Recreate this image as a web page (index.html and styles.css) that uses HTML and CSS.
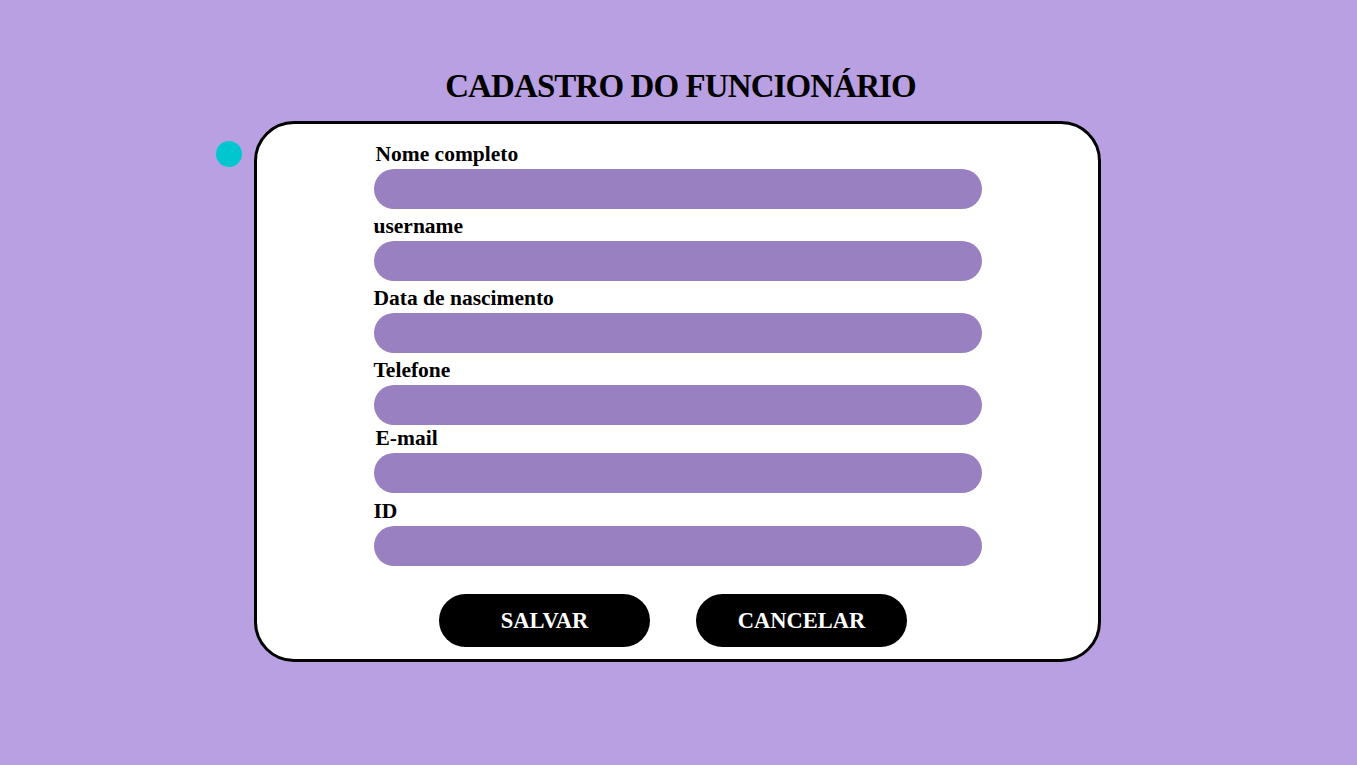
FILE: index.html
```html
<!DOCTYPE html>
<html lang="pt-BR">
<head>
<meta charset="utf-8">
<title>Cadastro do Funcionário</title>
<link rel="stylesheet" href="styles.css">
</head>
<body>
  <main class="page">
    <h1 class="title">CADASTRO DO FUNCIONÁRIO</h1>
    <form class="card">
      <span class="dot"></span>
      <div class="fields">
        <div class="field">
          <label class="label label-shift" for="nome">Nome completo</label>
          <input class="input" id="nome" type="text">
        </div>
        <div class="field">
          <label class="label" for="username">username</label>
          <input class="input" id="username" type="text">
        </div>
        <div class="field">
          <label class="label" for="nasc">Data de nascimento</label>
          <input class="input" id="nasc" type="text">
        </div>
        <div class="field">
          <label class="label" for="tel">Telefone</label>
          <input class="input" id="tel" type="text">
        </div>
        <div class="field field-tight">
          <label class="label label-shift" for="email">E-mail</label>
          <input class="input" id="email" type="text">
        </div>
        <div class="field field-loose">
          <label class="label" for="id">ID</label>
          <input class="input" id="id" type="text">
        </div>
      </div>
      <div class="actions">
        <button class="btn" type="button">SALVAR</button>
        <button class="btn" type="button">CANCELAR</button>
      </div>
    </form>
  </main>
</body>
</html>
```

FILE: styles.css
```css
* {
  box-sizing: border-box;
}

html, body {
  margin: 0;
  padding: 0;
}

body {
  background: #b9a0e2;
  font-family: "Liberation Serif", "Times New Roman", serif;
  color: #000;
  min-height: 765px;
}

.page {
  display: flex;
  flex-direction: column;
  align-items: center;
  padding-top: 66px;
}

.title {
  margin: 0 0 15px 4px;
  font-size: 33px;
  line-height: 40px;
  font-weight: 700;
  letter-spacing: -0.9px;
}

.card {
  position: relative;
  width: 847px;
  background: #fff;
  border: 3px solid #000;
  border-radius: 40px;
  padding: 18px 0 12px 0;
  display: flex;
  flex-direction: column;
  align-items: center;
  margin-left: -2px;
}

.dot {
  position: absolute;
  left: -41px;
  top: 17px;
  width: 26px;
  height: 26px;
  border-radius: 50%;
  background: #00c7cf;
}

.fields {
  width: 608px;
  display: flex;
  flex-direction: column;
  gap: 5px;
}

.field {
  display: flex;
  flex-direction: column;
}

.field-tight {
  margin-top: -4px;
}

.field-loose {
  margin-top: 1px;
}

.label {
  font-size: 21.5px;
  line-height: 24px;
  font-weight: 700;
  margin-bottom: 3px;
}

.label-shift {
  padding-left: 2px;
}

.input {
  width: 608px;
  height: 40px;
  border: none;
  border-radius: 20px;
  background: #9980c0;
  padding: 0 20px;
  font-family: inherit;
  font-size: 18px;
  outline: none;
}

.actions {
  display: flex;
  gap: 46px;
  margin-top: 28px;
  margin-right: 9px;
}

.btn {
  width: 211px;
  height: 53px;
  border: none;
  border-radius: 27px;
  background: #000;
  color: #fff;
  font-family: "Liberation Serif", "Times New Roman", serif;
  font-weight: 700;
  font-size: 22.5px;
  padding: 0;
  cursor: pointer;
}
```
